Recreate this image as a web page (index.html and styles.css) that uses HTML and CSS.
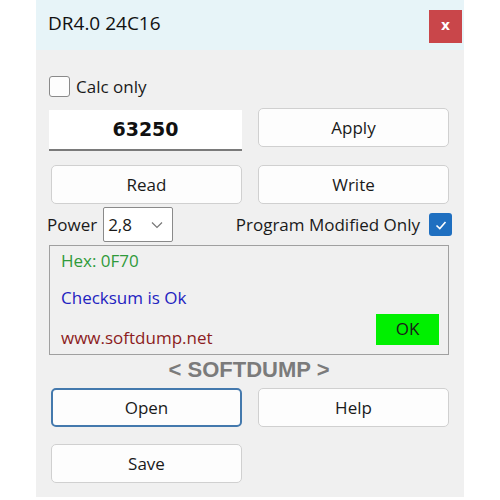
FILE: index.html
```html
<!DOCTYPE html>
<html>
	<head>
		<meta charset="UTF-8">
		<link rel="stylesheet" href="styles.css">
		<title>DR4.0 24C16</title>
	</head>
	<body>
		<div class="window">
			<div class="titlebar">
				<span class="title">DR4.0 24C16</span>
				<button class="btn-close">x</button>
			</div>
			<div class="content">
				<label class="check-row">
					<span class="checkbox"></span>
					<span class="check-text">Calc only</span>
				</label>
				<div class="row row-first">
					<div class="value-field">63250</div>
					<button class="btn">Apply</button>
				</div>
				<div class="row row-second">
					<button class="btn">Read</button>
					<button class="btn">Write</button>
				</div>
				<div class="power-row">
					<span class="power-label">Power</span>
					<div class="select">
						<span class="select-value">2,8</span>
						<svg class="chevron" width="12" height="8" viewBox="0 0 12 8"><path d="M1 1.5 L6 6.5 L11 1.5" fill="none" stroke="#777" stroke-width="1.2"/></svg>
					</div>
					<span class="modified-label">Program Modified Only</span>
					<span class="checkbox checked">
						<svg width="16" height="16" viewBox="0 0 16 16"><path d="M3.5 8.5 L6.8 11.5 L12.5 5" fill="none" stroke="#fff" stroke-width="1.6"/></svg>
					</span>
				</div>
				<div class="status-box">
					<p class="status-hex">Hex: 0F70</p>
					<p class="status-checksum">Checksum is Ok</p>
					<div class="status-bottom">
						<p class="status-site">www.softdump.net</p>
						<div class="ok-badge">OK</div>
					</div>
				</div>
				<div class="brand">&lt; SOFTDUMP &gt;</div>
				<div class="row row-open">
					<button class="btn btn-focus">Open</button>
					<button class="btn">Help</button>
				</div>
				<div class="row row-save">
					<button class="btn">Save</button>
				</div>
			</div>
		</div>
	</body>
</html>
```

FILE: styles.css
```css
body {
	margin: 0;
	background: #ffffff;
	font-family: 'Open Sans', 'Noto Sans', sans-serif;
	font-size: 17px;
	color: #1a1a1a;
}
.window {
	width: 428px;
	height: 497px;
	margin-left: 36px;
	background: #f0f0f0;
}
.titlebar {
	height: 50px;
	background: #e7f4f8;
	display: flex;
	align-items: flex-start;
	justify-content: space-between;
}
.title {
	margin: 10px 0 0 12px;
	font-size: 19px;
	color: #111;
}
.btn-close {
	margin: 10px 2px 0 0;
	width: 33px;
	height: 33px;
	border: 0;
	padding: 0 0 3px;
	background: #c9464a;
	color: #fff;
	font-family: 'DejaVu Sans', sans-serif;
	font-weight: bold;
	font-size: 14px;
}
.content {
	padding: 26px 15px 0 13px;
	display: flex;
	flex-direction: column;
}
.check-row {
	display: flex;
	align-items: center;
	height: 21px;
}
.checkbox {
	width: 19px;
	height: 19px;
	border: 1px solid #8a8a8a;
	border-radius: 3px;
	background: #fdfdfd;
	display: flex;
	align-items: center;
	justify-content: center;
}
.check-text {
	margin-left: 6px;
}
.row {
	display: grid;
	grid-template-columns: 191px 191px;
	gap: 16px;
	padding-left: 2px;
}
.row-first {
	margin-top: 11px;
	align-items: start;
	padding-left: 0;
	grid-template-columns: 193px 191px;
}
.value-field {
	height: 39px;
	margin-top: 2px;
	background: #fff;
	border-bottom: 2px solid #7a7a7a;
	text-align: center;
	font-family: 'DejaVu Sans', sans-serif;
	font-weight: bold;
	font-size: 19px;
	line-height: 39px;
	color: #111;
}
.btn {
	height: 39px;
	border: 1px solid #d0d0d0;
	border-radius: 5px;
	background: #fdfdfd;
	font-family: 'Open Sans', 'Noto Sans', sans-serif;
	font-size: 17px;
	color: #1a1a1a;
	padding: 0;
}
.row-second {
	margin-top: 14px;
}
.power-row {
	margin-top: 3px;
	height: 35px;
	display: flex;
	align-items: center;
}
.power-label {
	margin-left: -2px;
}
.select {
	margin-left: 6px;
	width: 70px;
	height: 35px;
	border: 1px solid #8a8a8a;
	border-radius: 2px;
	background: #fff;
	display: flex;
	align-items: center;
	justify-content: space-between;
	padding: 0 9px 0 4px;
	box-sizing: border-box;
}
.modified-label {
	margin-left: auto;
	margin-right: 9px;
}
.checkbox.checked {
	width: 23px;
	height: 23px;
	margin-right: -3px;
	border: 0;
	background: #1f6fc0;
	border-radius: 3px;
}
.status-box {
	margin-top: 3px;
	height: 108px;
	border: 1px solid #a0a0a0;
	padding: 0 9px 0 11px;
	display: flex;
	flex-direction: column;
}
.status-box p {
	margin: 0;
}
.status-hex {
	margin-top: 3px !important;
	color: #2f9a3a;
}
.status-checksum {
	margin-top: 14px !important;
	color: #2323c0;
}
.status-bottom {
	margin-top: auto;
	margin-bottom: 5px;
	display: flex;
	align-items: flex-end;
	justify-content: space-between;
}
.status-site {
	color: #8c1c22;
}
.ok-badge {
	width: 63px;
	height: 31px;
	margin-bottom: 4px;
	background: #00f000;
	text-align: center;
	line-height: 30px;
}
.brand {
	margin-top: 2px;
	text-align: center;
	font-family: 'Liberation Sans', Arial, sans-serif;
	font-weight: bold;
	font-size: 22px;
	color: #7b7b7b;
	height: 28px;
	line-height: 26px;
}
.row-open {
	margin-top: 3px;
}
.btn-focus {
	border: 2px solid #4479ad;
}
.row-save {
	margin-top: 17px;
}
```
